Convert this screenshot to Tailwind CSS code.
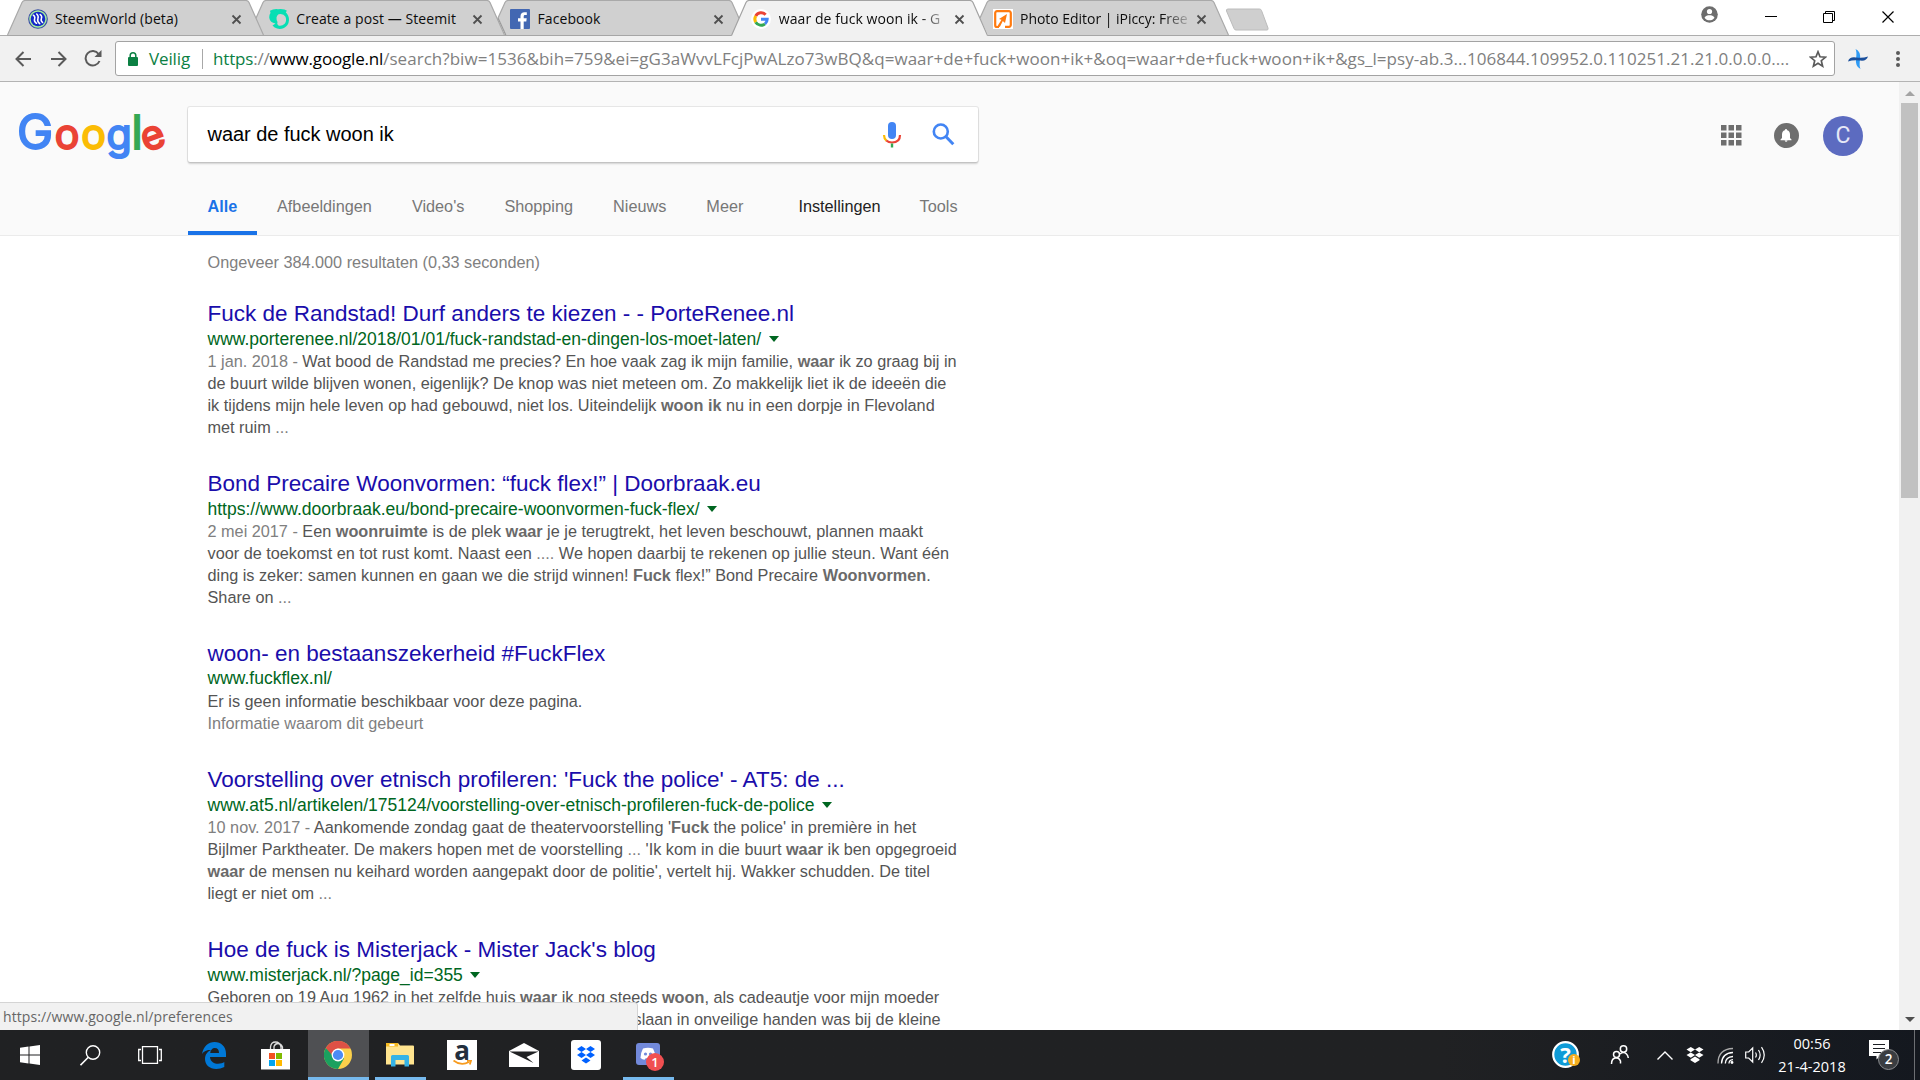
<!DOCTYPE html>
<html lang="nl">
<head>
<meta charset="utf-8">
<title>waar de fuck woon ik - Google zoeken</title>
<script src="https://cdn.jsdelivr.net/npm/@tailwindcss/browser@4"></script>
</head>
<body class="w-[1920px] h-[1080px] overflow-hidden flex flex-col bg-white font-['Liberation_Sans',Arial,sans-serif]">

<!-- Tab strip -->
<div class="h-9 shrink-0 flex bg-white border-b border-[#adadad] pl-[7px] font-['Open_Sans',sans-serif] text-[14px] tracking-[0.08px] text-[#0c0c0c]">
  <div class="relative z-10 w-[257px] h-9 -mr-[15.75px] shrink-0 flex items-start pl-[21px] pt-[9px]">
    <svg class="absolute inset-0" width="257" height="36" viewBox="0 0 257 36"><path d="M0.5 35 L15 2.5 Q16 .5 18 .5 H239 Q241 .5 242 2.5 L256.500 35" fill="#d0d0d0" stroke="#a9a9a9" stroke-width="1.2"/><path d="M0 35.500H257" stroke="#a6a6a6"/></svg>
    <svg class="relative shrink-0" width="20" height="20" viewBox="0 0 20 20"><circle cx="10" cy="10" r="9.300" fill="#a6ef9a" stroke="#3b4ea8" stroke-width="1.100"/><circle cx="10" cy="10" r="7.300" fill="#1328c8"/><path d="M5.300 6.200q2.200 1.600 1.300 3.800t1.900 4.300M8.700 5q2.200 2 1.200 4.800t1.800 4.900M12.200 5.500q2.200 1.800 1.200 4t1.200 4" fill="none" stroke="#fff" stroke-width="1.500" stroke-linecap="round"/></svg>
    <span class="relative ml-[7px] w-[166px] h-5 leading-5 whitespace-nowrap">SteemWorld (beta)</span>
    <svg class="relative ml-[9.500px] mt-[5px]" width="11" height="11" viewBox="0 0 11 11"><path d="M1.500 1.500l8 8M9.500 1.500l-8 8" stroke="#4f4f4f" stroke-width="1.800"/></svg>
  </div>
  <div class="relative w-[257px] h-9 -mr-[15.75px] shrink-0 flex items-start pl-[21px] pt-[9px]">
    <svg class="absolute inset-0" width="257" height="36" viewBox="0 0 257 36"><path d="M0.5 35 L15 2.5 Q16 .5 18 .5 H239 Q241 .5 242 2.5 L256.500 35" fill="#d0d0d0" stroke="#a9a9a9" stroke-width="1.2"/><path d="M0 35.500H257" stroke="#a6a6a6"/></svg>
    <svg class="relative shrink-0" width="20" height="20" viewBox="0 0 20 20"><path d="M6.500 14.500Q1 13.500 .3 9 0 6 1.500 4L1 1.800Q4.500-.3 9 .2q3.500-.5 6.500.3l2.500 1.300-1.200 1.500Q20 6.500 20 11q-.3 5.500-5 8-5 2-9.300-.5L3.500 16.500Z" fill="#07dfb4"/><path d="M9.500 5.300q5-1 7 2.400 1.500 4-.8 7-2.700 2.600-6.300 1.800Q7.500 15.500 8.500 13 6 8 9.500 5.300Z" fill="#d0d0d0"/></svg>
    <span class="relative ml-[7px] w-[166px] h-5 leading-5 whitespace-nowrap">Create a post — Steemit</span>
    <svg class="relative ml-[9.500px] mt-[5px]" width="11" height="11" viewBox="0 0 11 11"><path d="M1.500 1.500l8 8M9.500 1.500l-8 8" stroke="#4f4f4f" stroke-width="1.800"/></svg>
  </div>
  <div class="relative w-[257px] h-9 -mr-[15.75px] shrink-0 flex items-start pl-[21px] pt-[9px]">
    <svg class="absolute inset-0" width="257" height="36" viewBox="0 0 257 36"><path d="M8 18 L15 2.500 Q16 .5 18 .5 H239 Q241 .5 242 2.500 L256.500 35 H16Z" fill="#d0d0d0"/><path d="M8 18 L15 2.500 Q16 .5 18 .5 H239 Q241 .5 242 2.500 L256.500 35" fill="none" stroke="#a9a9a9" stroke-width="1.200"/><path d="M8 18L15.800 35" stroke="#999" stroke-width="1.200"/><path d="M15 35.500H257" stroke="#a6a6a6"/></svg>
    <svg class="relative -ml-px mr-px shrink-0" width="20" height="20" viewBox="0 0 20 20"><rect width="20" height="20" rx="1" fill="#4267b2"/><path d="M10.500 20v-7.500H8V9.300h2.500V7.200c0-2.700 1.600-4 4-4 1.100 0 2 .1 2.300.1v2.800h-1.600c-1.200 0-1.500.6-1.500 1.500v1.700h3l-.4 3.200h-2.600V20Z" fill="#fff"/></svg>
    <span class="relative ml-[7px] w-[166px] h-5 leading-5 whitespace-nowrap">Facebook</span>
    <svg class="relative ml-[9.500px] mt-[5px]" width="11" height="11" viewBox="0 0 11 11"><path d="M1.500 1.500l8 8M9.500 1.500l-8 8" stroke="#4f4f4f" stroke-width="1.800"/></svg>
  </div>
  <div class="relative z-20 w-[257px] h-9 -mr-[15.750px] shrink-0 flex items-start pl-[21px] pt-[9px]">
    <svg class="absolute inset-0" width="257" height="36" viewBox="0 0 257 36"><path d="M0.500 36 L15 2.500 Q16 .5 18 .5 H239 Q241 .5 242 2.500 L256.500 36Z" fill="#f1f1f1"/><path d="M0.500 35.500 L15 2.500 Q16 .5 18 .5 H239 Q241 .5 242 2.500 L256.500 35.500" fill="none" stroke="#a3a3a3" stroke-width="1.200"/></svg>
    <svg class="relative -ml-px mr-px shrink-0" width="20" height="20" viewBox="0 0 20 20"><circle cx="10" cy="10" r="10" fill="#fff"/><g fill="none" stroke-width="3"><path d="M14.600 5.700A6.200 6.200 0 0 0 4.700 7" stroke="#ea4335"/><path d="M4.700 7a6.200 6.200 0 0 0 0 6.200" stroke="#fbbc05"/><path d="M4.700 13.200a6.200 6.200 0 0 0 9.300 1.600" stroke="#34a853"/><path d="M14 14.800a6 6 0 0 0 2.200-4.500H10" stroke="#4285f4"/></g></svg>
    <span class="relative ml-[7px] w-[166px] h-5 leading-5 whitespace-nowrap [mask-image:linear-gradient(to_right,black_142px,transparent_172px)]">waar de fuck woon ik - G</span>
    <svg class="relative ml-[9.500px] mt-[5px]" width="11" height="11" viewBox="0 0 11 11"><path d="M1.500 1.500l8 8M9.500 1.500l-8 8" stroke="#4f4f4f" stroke-width="1.800"/></svg>
  </div>
  <div class="relative w-[257px] h-9 shrink-0 flex items-start pl-[21px] pt-[9px]">
    <svg class="absolute inset-0" width="257" height="36" viewBox="0 0 257 36"><path d="M8 18 L15 2.500 Q16 .5 18 .5 H239 Q241 .5 242 2.500 L256.500 35 H16Z" fill="#d0d0d0"/><path d="M8 18 L15 2.500 Q16 .5 18 .5 H239 Q241 .5 242 2.500 L256.500 35" fill="none" stroke="#a9a9a9" stroke-width="1.200"/><path d="M15 35.500H257" stroke="#a6a6a6"/></svg>
    <svg class="relative shrink-0" width="20" height="20" viewBox="0 0 20 20"><rect width="20" height="20" fill="#fff"/><path d="M6 18H4a1.800 1.800 0 0 1-1.800-1.800V4A1.800 1.800 0 0 1 4 2.200h12A1.800 1.800 0 0 1 17.800 4v12a1.800 1.800 0 0 1-1.800 1.800h-4" fill="none" stroke="#ff7b0f" stroke-width="2.200"/><path d="M14 5l-8 5 2.500.8L4.500 17l2.300 1 3-6 2.200 2Z" fill="#ff7b0f"/></svg>
    <span class="relative ml-[7px] w-[168px] h-5 leading-5 tracking-[-0.03px] whitespace-nowrap [mask-image:linear-gradient(to_right,black_142px,transparent_174px)]">Photo Editor | iPiccy: Free</span>
    <svg class="relative ml-[7.500px] mt-[5px]" width="11" height="11" viewBox="0 0 11 11"><path d="M1.500 1.500l8 8M9.500 1.500l-8 8" stroke="#4f4f4f" stroke-width="1.800"/></svg>
  </div>
  <svg class="-ml-[4px] mt-2 shrink-0" width="44" height="24" viewBox="0 0 44 24"><path d="M3 1h31.500q1.500 0 2 1.500L43 20q.5 2-1 2H11q-1.500 0-2-1.500L1.500 3Q1 1 3 1Z" fill="#cfcfcf" stroke="#bcbcbc"/></svg>
  <div class="ml-auto mr-[26px] flex items-start">
    <svg class="mt-[6px]" width="17" height="17" viewBox="0 0 17 17"><circle cx="8.500" cy="8.500" r="8.300" fill="#6d6d6d"/><circle cx="8.500" cy="5.500" r="2.600" fill="#fff"/><path d="M3.500 11.700C4.500 9.700 6.500 9.200 8.500 9.200s4 .5 5 2.500c-1 1.600-3 2.600-5 2.600s-4-1-5-2.600Z" fill="#fff"/></svg>
    <svg class="ml-[47px] mt-[16px]" width="12" height="1"><rect width="12" height="1" fill="#000"/></svg>
    <svg class="ml-[46px] mt-[11px]" width="12" height="12" viewBox="0 0 12 12"><path d="M.5 2.500h9v9h-9zM2.500 2.500v-2h9v9h-2" fill="none" stroke="#000"/></svg>
    <svg class="ml-[47px] mt-[11px]" width="12" height="12" viewBox="0 0 12 12"><path d="M.5.5l11 11M11.500.5l-11 11" stroke="#000" stroke-width="1.200"/></svg>
  </div>
</div>

<!-- Toolbar -->
<div class="h-[46px] shrink-0 flex items-center bg-[#f1f1f1] border-b border-[#b3b3b3] pl-[15px] font-['Open_Sans',sans-serif]">
  <svg width="17" height="16" viewBox="0 0 17 16"><path d="M16 8H1.500M8.500 1L1.500 8l7 7" fill="none" stroke="#5a5a5a" stroke-width="2"/></svg>
  <svg class="ml-[18px]" width="17" height="16" viewBox="0 0 17 16"><path d="M1 8h14.500M8.500 1l7 7-7 7" fill="none" stroke="#5a5a5a" stroke-width="2"/></svg>
  <svg class="ml-[17px]" width="18" height="17" viewBox="0 0 18 17"><path d="M14.600 4A7.200 7.200 0 1 0 15.500 11" fill="none" stroke="#5a5a5a" stroke-width="2"/><path d="M17.500 0v7h-7Z" fill="#5a5a5a"/></svg>
  <div class="ml-[13px] w-[1720px] h-[35px] shrink-0 flex items-center bg-white border border-[#a3a3a3] rounded-[3px] pl-3 text-[17px] whitespace-nowrap">
    <svg width="10" height="14" viewBox="0 0 10 14"><rect y="5" width="10" height="9" rx="1" fill="#0b8043"/><path d="M2.200 6V3.600a2.800 2.800 0 0 1 5.600 0V6" fill="none" stroke="#0b8043" stroke-width="1.500"/></svg>
    <span class="ml-[11px] w-[42px] text-[#0b8043] tracking-[-0.13px]">Veilig</span>
    <span class="ml-[11px] w-px h-5 bg-[#a8a8a8]"></span>
    <span class="ml-[10px] w-[1578px] text-[#808080] tracking-[0.042px]"><span class="tracking-[-0.18px]"><span class="text-[#0b8043]">https</span>://<span class="text-black">www.google.nl</span></span>/search?biw=1536&amp;bih=759&amp;ei=gG3aWvvLFcjPwALzo73wBQ&amp;q=waar+de+fuck+woon+ik+&amp;oq=waar+de+fuck+woon+ik+&amp;gs_l=psy-ab.3...106844.109952.0.110251.21.21.0.0.0.0....</span>
    <svg class="ml-[18px] shrink-0" width="18" height="18" viewBox="0 0 18 18"><path d="M9 1.800l2 5 5.500.4-4.200 3.500 1.300 5.400L9 13.200l-4.600 2.900 1.300-5.400L1.500 7.200 7 6.800Z" fill="none" stroke="#5a5a5a" stroke-width="1.700"/></svg>
  </div>
  <svg class="ml-[13px] shrink-0" width="20" height="20" viewBox="0 0 20 20"><path d="M7.500 0q5.500 2.500 4.500 10t.5 10Q7 17.500 8 10T7.500 0Z" fill="#2f9bf5"/><path d="M0 12.500Q1.500 7.500 8 8.500T20 7.500Q18.500 12.500 12 11.500T0 12.500Z" fill="#1a4f9c"/></svg>
  <svg class="ml-[28px] shrink-0" width="4" height="16" viewBox="0 0 4 16"><circle cx="2" cy="2" r="2" fill="#5a5a5a"/><circle cx="2" cy="8" r="2" fill="#5a5a5a"/><circle cx="2" cy="14" r="2" fill="#5a5a5a"/></svg>
</div>

<!-- Page -->
<div class="relative h-[948px] shrink-0 flex">
  <main class="w-[1899px] h-[948px] overflow-hidden">
    <header class="h-[154px] bg-[#fafafa] border-b border-[#ebebeb] flex flex-col">
      <div class="flex items-start">
        <svg class="ml-[15px] mt-[26px] shrink-0 overflow-visible" width="152" height="56" viewBox="0 0 152 56" font-family="Inter, sans-serif" text-anchor="middle">
          <text x="20" y="41" font-size="48.500" fill="#4285f4" stroke="#4285f4" stroke-width="1.800">G</text>
          <text x="52" y="41" font-size="41" fill="#ea4335" stroke="#ea4335" stroke-width="2">o</text>
          <text x="78.500" y="41" font-size="41" fill="#fbbc05" stroke="#fbbc05" stroke-width="2">o</text>
          <text x="104" y="41" font-size="41" fill="#4285f4" stroke="#4285f4" stroke-width="2">g</text>
          <text x="122" y="41" font-size="46" fill="#34a853" stroke="#34a853" stroke-width="1.800">l</text>
          <text x="138" y="41" font-size="40" fill="#ea4335" stroke="#ea4335" stroke-width="2" transform="rotate(-20 138 30)">e</text>
        </svg>
        <div class="ml-[21px] mt-[25px] w-[790px] h-[55px] shrink-0 flex items-center bg-white rounded-[2px] shadow-[0_2px_2px_rgba(0,0,0,0.16),0_0_0_1px_rgba(0,0,0,0.08)] pl-[19.500px]">
          <span class="w-[674.500px] pb-[2px] text-[20px] leading-6 tracking-[-0.03px] text-black">waar de fuck woon ik</span>
          <svg class="shrink-0" width="20" height="26" viewBox="0 0 20 26"><rect x="6" y="0" width="8" height="17" rx="4" fill="#4285f4"/><path d="M2 13q0 3.500 2.500 5.700" fill="none" stroke="#fbbc05" stroke-width="2.200"/><path d="M4.300 18.500Q6.500 20.500 10 20.500q8 0 8-7.500" fill="none" stroke="#ea4335" stroke-width="2.200"/><path d="M10 21.500v4" stroke="#34a853" stroke-width="2.400"/></svg>
          <svg class="ml-[29.500px] shrink-0" width="23" height="23" viewBox="0 0 23 23"><circle cx="8.800" cy="8.500" r="7" fill="none" stroke="#4285f4" stroke-width="2.600"/><path d="M13.800 13.500l7.500 7.700" stroke="#4285f4" stroke-width="3"/></svg>
        </div>
        <svg class="ml-[742.500px] mt-[43px] shrink-0" width="21" height="21" viewBox="0 0 21 21" fill="#6e6e6e"><path d="M0 0h5.500v5.500H0zM7.500 0H13v5.500H7.500zM15 0h5.500v5.500H15zM0 7.500h5.500V13H0zM7.500 7.500H13V13H7.500zM15 7.500h5.500V13H15zM0 15h5.500v5.500H0zM7.500 15H13v5.500H7.500zM15 15h5.500v5.500H15z"/></svg>
        <svg class="ml-[32.500px] mt-[41px] shrink-0" width="25" height="25" viewBox="0 0 25 25"><circle cx="12.500" cy="12.500" r="12.500" fill="#6e6e6e"/><path d="M12 6q1 0 1.200 1.200Q16 8 16 11.500V15l1.500 1.500v.7h-11v-.7L8 15v-3.500Q8 8 10.800 7.200 11 6 12 6ZM10.700 17.500h2.800q-.2 1.200-1.400 1.200t-1.400-1.200Z" fill="#fff"/></svg>
        <div class="ml-[24px] mt-[34px] size-10 shrink-0 rounded-full bg-[#5c6bc0] text-[#e6e8f6] flex items-center justify-center pt-px font-['Roboto',sans-serif] text-[23px]">C</div>
      </div>
      <nav class="ml-[188px] mt-auto h-[45px] flex text-[16.25px] leading-[32px] text-[#777] whitespace-nowrap">
        <div class="w-[69px] h-[45px] border-b-4 border-[#1a73e8] text-center font-bold text-[#1a73e8]">Alle</div>
        <div class="ml-5">Afbeeldingen</div>
        <div class="ml-10">Video's</div>
        <div class="ml-10">Shopping</div>
        <div class="ml-10">Nieuws</div>
        <div class="ml-10">Meer</div>
        <div class="ml-[55px] text-[#222]">Instellingen</div>
        <div class="ml-[39px]">Tools</div>
      </nav>
    </header>

    <section class="ml-[207.500px] pt-[15px] text-[16.25px] leading-[22px] text-[#545454] whitespace-nowrap">
      <div class="text-[#808080]">Ongeveer 384.000 resultaten (0,33 seconden)</div>

      <article class="mt-[27px] h-[170px]">
        <h3 class="text-[22.5px] leading-[28px] text-[#1a0dab]">Fuck de Randstad! Durf anders te kiezen - - PorteRenee.nl</h3>
        <div class="flex items-center text-[17.5px] text-[#006621]">www.porterenee.nl/2018/01/01/fuck-randstad-en-dingen-los-moet-laten/<svg class="ml-[7.500px]" width="10" height="6"><path d="M0 0h10L5 6Z" fill="#006621"/></svg></div>
        <p><span class="text-[#808080]">1 jan. 2018 - </span>Wat bood de Randstad me precies? En hoe vaak zag ik mijn familie, <b class="text-[#6a6a6a]">waar</b> ik zo graag bij in<br>de buurt wilde blijven wonen, eigenlijk? De knop was niet meteen om. Zo makkelijk liet ik de ideeën die<br>ik tijdens mijn hele leven op had gebouwd, niet los. Uiteindelijk <b class="text-[#6a6a6a]">woon ik</b> nu in een dorpje in Flevoland<br>met ruim <span class="text-[#808080]">...</span></p>
      </article>

      <article class="h-[170px]">
        <h3 class="text-[22.5px] leading-[28px] text-[#1a0dab]">Bond Precaire Woonvormen: “fuck flex!” | Doorbraak.eu</h3>
        <div class="flex items-center text-[17.5px] text-[#006621]">https://www.doorbraak.eu/bond-precaire-woonvormen-fuck-flex/<svg class="ml-[7.500px]" width="10" height="6"><path d="M0 0h10L5 6Z" fill="#006621"/></svg></div>
        <p><span class="text-[#808080]">2 mei 2017 - </span>Een <b class="text-[#6a6a6a]">woonruimte</b> is de plek <b class="text-[#6a6a6a]">waar</b> je je terugtrekt, het leven beschouwt, plannen maakt<br>voor de toekomst en tot rust komt. Naast een <span class="text-[#808080]">....</span> We hopen daarbij te rekenen op jullie steun. Want één<br>ding is zeker: samen kunnen en gaan we die strijd winnen! <b class="text-[#6a6a6a]">Fuck</b> flex!” Bond Precaire <b class="text-[#6a6a6a]">Woonvormen</b>.<br>Share on <span class="text-[#808080]">...</span></p>
      </article>

      <article class="h-[126px]">
        <h3 class="text-[22.5px] leading-[27px] text-[#1a0dab]">woon- en bestaanszekerheid #FuckFlex</h3>
        <div class="text-[17.5px] text-[#006621]">www.fuckflex.nl/</div>
        <p class="pt-px">Er is geen informatie beschikbaar voor deze pagina.<br><span class="text-[#808080]">Informatie waarom dit gebeurt</span></p>
      </article>

      <article class="h-[170px]">
        <h3 class="text-[22.5px] leading-[28px] text-[#1a0dab]">Voorstelling over etnisch profileren: 'Fuck the police' - AT5: de ...</h3>
        <div class="flex items-center text-[17.5px] text-[#006621]">www.at5.nl/artikelen/175124/voorstelling-over-etnisch-profileren-fuck-de-police<svg class="ml-[7.500px]" width="10" height="6"><path d="M0 0h10L5 6Z" fill="#006621"/></svg></div>
        <p><span class="text-[#808080]">10 nov. 2017 - </span>Aankomende zondag gaat de theatervoorstelling '<b class="text-[#6a6a6a]">Fuck</b> the police' in première in het<br>Bijlmer Parktheater. De makers hopen met de voorstelling <span class="text-[#808080]">...</span> 'Ik kom in die buurt <b class="text-[#6a6a6a]">waar</b> ik ben opgegroeid<br><b class="text-[#6a6a6a]">waar</b> de mensen nu keihard worden aangepakt door de politie', vertelt hij. Wakker schudden. De titel<br>liegt er niet om <span class="text-[#808080]">...</span></p>
      </article>

      <article>
        <h3 class="text-[22.5px] leading-[28px] text-[#1a0dab]">Hoe de fuck is Misterjack - Mister Jack's blog</h3>
        <div class="flex items-center text-[17.5px] text-[#006621]">www.misterjack.nl/?page_id=355<svg class="ml-[7.500px]" width="10" height="6"><path d="M0 0h10L5 6Z" fill="#006621"/></svg></div>
        <p>Geboren op 19 Aug 1962 in het zelfde huis <b class="text-[#6a6a6a]">waar</b> ik nog steeds <b class="text-[#6a6a6a]">woon</b>, als cadeautje voor mijn moeder</p>
        <p class="pl-[426px]">slaan in onveilige handen was bij de kleine</p>
      </article>
    </section>
  </main>

  <!-- Scrollbar -->
  <div class="w-[21px] h-[948px] flex flex-col items-center bg-[#f1f1f1]">
    <svg class="mt-[9px] shrink-0" width="10" height="5"><path d="M0 5h10L5 0Z" fill="#a3a3a3"/></svg>
    <div class="mt-[7px] w-[17px] h-[395px] bg-[#c1c1c1]"></div>
    <svg class="mt-auto mb-[8px] shrink-0" width="10" height="5"><path d="M0 0h10L5 5Z" fill="#505050"/></svg>
  </div>

  <!-- Link status bubble -->
  <div class="absolute left-0 bottom-0 w-[638px] h-7 bg-[#f1f1f1] border-t border-r border-[#d4d4d4] rounded-tr-[4px] pl-[3px] font-['Open_Sans',sans-serif] text-[14px] leading-[28px] tracking-[0.1px] text-[#666]">https://www.google.nl/preferences</div>
</div>

<!-- Taskbar -->
<div class="h-[50px] shrink-0 flex items-center bg-linear-to-r from-[#202123] from-75% to-[#14181f] text-white">
  <div class="w-[308px] h-full flex items-center pl-5">
    <svg width="20" height="20" viewBox="0 0 20 20" fill="#fff"><path d="M0 2.700l8.500-1.200v8H0zM9.500 1.400L20 0v9.500H9.500zM0 10.500h8.500v8L0 17.300zM9.500 10.500H20V20L9.500 18.600z"/></svg>
    <svg class="ml-10" width="21" height="21" viewBox="0 0 21 21"><circle cx="13" cy="7.500" r="6.700" fill="none" stroke="#fff" stroke-width="1.400"/><path d="M8.300 12.300L.5 20.200" stroke="#fff" stroke-width="1.600"/></svg>
    <svg class="ml-[37px]" width="24" height="18" viewBox="0 0 24 18"><path d="M4.500.5h15v17h-15zM3 3.500H.7v11H3M21 3.500h2.300v11H21" fill="none" stroke="#fff" stroke-width="1.300"/></svg>
    <svg class="ml-[38.500px]" width="26" height="27" viewBox="0 0 26 27"><path d="M1 12C2.500 4 7.500 0 13.500 0 20 0 25 4.500 25 11.500V15H9c.3 5 4.500 6.800 8 6.800 2.700 0 4.800-.8 6.300-1.700v5c-2.500 1.300-5.300 1.900-8 1.900C8.500 27 4 22.700 4 17c0-4.500 2.500-7.500 6.500-9.300C5.500 7.800 2.500 9.500 1 12ZM9.200 11H18c0-3.200-1.500-5-4.200-5-2.600 0-4.300 2-4.600 5Z" fill="#0078d7"/></svg>
    <svg class="ml-[34.500px]" width="29" height="29" viewBox="0 0 29 29"><path d="M9.500 8V6Q10 1 14.500 1T20 6v2M13 8V5.500Q14 2.500 17 2.500T21.500 6v2" fill="none" stroke="#ddd" stroke-width="1.300"/><path d="M0 8h29v20.500H0z" fill="#fff"/><path d="M8 12h6v6H8z" fill="#f25022"/><path d="M15 12h6v6h-6z" fill="#7fba00"/><path d="M8 19h6v6H8z" fill="#00a4ef"/><path d="M15 19h6v6h-6z" fill="#ffb900"/></svg>
  </div>
  <div class="w-[61px] h-full flex items-center justify-center bg-[#4f5053] border-b-3 border-[#76b9ed]">
    <svg class="mt-[3px] mr-[1px]" width="28" height="28" viewBox="0 0 28 28"><circle cx="14" cy="14" r="14" fill="#fbd04b"/><path d="M1.800 7A14 14 0 0 1 26.200 7H14L8 17.500Z" fill="#de5145"/><path d="M1.800 7A14 14 0 0 0 14 28L20 17.500 14 14H8Z" fill="#1aa15f"/><path d="M14 7h12.200" stroke="#de5145" stroke-width="1"/><circle cx="14" cy="14" r="6.400" fill="#fff"/><circle cx="14" cy="14" r="5.100" fill="#4b8bf4"/></svg>
  </div>
  <div class="ml-[6px] w-[51px] h-full flex items-center justify-center border-b-3 border-[#76b9ed]">
    <svg class="mt-[3px] mr-[2px]" width="28" height="24" viewBox="0 0 28 24"><path d="M0 1Q0 0 1 0h11l2 2.500h13q1 0 1 1V21.500H0Z" fill="#ffe48f"/><path d="M0 0h12v3.500H0z" fill="#f5b921"/><path d="M3.500 1h5v2h-5z" fill="#fff"/><path d="M5 23.500V13.500Q5 12 6.500 12h15q1.500 0 1.500 1.500v10h-4.500V17h-9v6.500Z" fill="#36b3e6"/></svg>
  </div>
  <div class="ml-[21px] size-[30px] bg-white flex flex-col items-center text-[#232f3e]">
    <span class="h-[20px] font-['Open_Sans',sans-serif] font-bold text-[26px] leading-[21px]">a</span>
    <svg width="19" height="6" viewBox="0 0 19 6"><path d="M.5.5Q8 6.500 16 2M14 1l4-.3-1.200 3.800" fill="none" stroke="#f79b1e" stroke-width="1.800"/></svg>
  </div>
  <svg class="ml-8" width="30" height="24" viewBox="0 0 30 24"><path d="M0 8L15 0l15 8v16H0Z" fill="#fff"/><path d="M.5 8.500h29L17.500 14l7 6L.5 8.500Z" fill="#202123"/></svg>
  <div class="ml-8 size-[30px] rounded-[3px] bg-white flex items-center justify-center">
    <svg width="18" height="18" viewBox="0 0 18 18" fill="#0061ff"><path d="M4.500 0L9 3 4.500 6 0 3zM13.500 0L18 3l-4.500 3L9 3zM4.500 6L9 9l-4.500 3L0 9zM13.500 6L18 9l-4.500 3L9 9zM9 11.500l4.500 3L9 17.500l-4.500-3z"/></svg>
  </div>
  <div class="ml-[22px] w-[51px] h-full border-b-3 border-[#76b9ed] pl-[13px] pt-[13px]">
    <div class="relative w-6 h-6">
      <svg width="24" height="23" viewBox="0 0 24 23"><rect width="24" height="22" rx="3" fill="#7289da"/><path d="M7 5.500Q12 4 17 5.500q2.500 4.500 2.500 9.500-2 1.700-4 1.800l-1.200-1.500H9.700l-1.200 1.500q-2-.1-4-1.800Q4.500 10 7 5.500Z" fill="#fff"/><circle cx="9.500" cy="11" r="1.600" fill="#7289da"/><circle cx="14.500" cy="11" r="1.600" fill="#7289da"/></svg>
      <span class="absolute left-[10px] top-[10px] size-[18px] rounded-full bg-[#f04f51] text-center font-['Open_Sans',sans-serif] font-semibold text-[13px] leading-[18px]">1</span>
    </div>
  </div>

  <!-- System tray -->
  <div class="ml-auto h-full flex items-center">
    <div class="relative size-[28px]">
      <svg width="28" height="28" viewBox="0 0 28 28"><circle cx="13.500" cy="13.500" r="12.300" fill="#0f9bd7" stroke="#fff" stroke-width="2.200"/><circle cx="22" cy="19" r="6" fill="#f5ad1e"/></svg>
      <span class="absolute left-0 top-0 w-[27px] text-center font-['Open_Sans',sans-serif] font-bold text-[22px] leading-[27px]">?</span>
      <span class="absolute left-[16px] top-[12px] w-3 text-center font-['Open_Sans',sans-serif] font-bold text-[11px] leading-[14px]">i</span>
    </div>
    <svg class="ml-[30px]" width="20" height="20" viewBox="0 0 20 20" fill="none" stroke="#fff" stroke-width="1.500"><circle cx="6.500" cy="9.500" r="3"/><path d="M1.500 19q0-6 5-6.200Q9 13 10.500 16v2.500"/><circle cx="13.500" cy="4" r="3.200"/><path d="M10 9q3.500-3 6.500 0 1.500 1.500 1.800 4"/></svg>
    <svg class="ml-[27px]" width="16" height="9" viewBox="0 0 16 9"><path d="M.5 8.500L8 1l7.500 7.500" fill="none" stroke="#fff" stroke-width="1.400"/></svg>
    <svg class="ml-[13px]" width="18" height="16" viewBox="0 0 18 16" fill="#fff"><path d="M4.800 0L9 2.600 4.800 5.300.5 2.600zM13.200 0l4.300 2.600-4.300 2.700L9 2.600zM4.800 5.400L9 8l-4.200 2.700L.5 8zM13.200 5.400L17.500 8l-4.300 2.700L9 8zM9 9.500l4.500 2.800v1L9 16l-4.500-2.700v-1z"/></svg>
    <svg class="ml-[13px]" width="17" height="17" viewBox="0 0 17 17" fill="none" stroke-width="1.300"><path d="M1 16.500Q1 2 16 1.500" stroke="#aaa"/><path d="M4.500 16.500Q5 6 16 5.500M8.300 16.500Q8.500 10 16 9.500M12 16.500q0-3.500 4-3.800" stroke="#fff"/><circle cx="15" cy="15.500" r="1.400" fill="#fff"/></svg>
    <svg class="ml-[11px]" width="21" height="18" viewBox="0 0 21 18" fill="none" stroke="#fff" stroke-width="1.200"><path d="M.7 6h3l4-4v14l-4-4h-3zM10.500 6.500q1.700 2.500 0 5M13.500 4q3.300 5 0 10M16.500 1.200q5.500 7.800 0 15.600"/></svg>
    <div class="ml-[11px] w-[70px] text-center font-['Open_Sans',sans-serif] text-[14.500px] leading-[23px]"><div>00:56</div><div>21-4-2018</div></div>
    <div class="relative ml-[22px] w-[31px] h-[31px]">
      <svg class="absolute left-0 top-0" width="20" height="20" viewBox="0 0 20 20"><path d="M0 0h20v16h-9l-3.500 3.500V16H0Z" fill="#fff"/><path d="M4 4.500h12M4 8.500h12M4 12.500h8" stroke="#1b1e23" stroke-width="1.200"/></svg>
      <span class="absolute left-[9px] top-[9px] size-[21px] rounded-full bg-[#3a3d41] border border-[#8b8d90] text-center font-['Open_Sans',sans-serif] font-semibold text-[13.5px] leading-[19px]">2</span>
    </div>
    <div class="ml-[14px] mr-[5px] w-px h-full bg-[#6c6f73]"></div>
  </div>
</div>
</body>
</html>
